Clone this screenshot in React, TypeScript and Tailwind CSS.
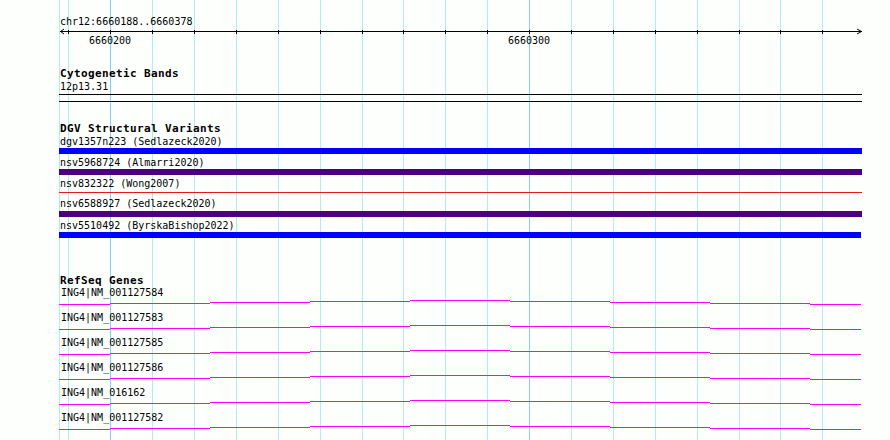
import React from "react";

const GRID = [59, 68, 110, 152, 194, 236, 278, 320, 362, 403, 445, 487, 529, 571, 613, 655, 697, 739, 780, 822];
const MAJOR = [110, 529];
const TICKS = GRID.filter((x) => x !== 59);

const DGV = [
  { label: "dgv1357n223 (Sedlazeck2020)", kind: "bar", color: "bg-[#0000ff]", w: "w-[803px]" },
  { label: "nsv5968724 (Almarri2020)", kind: "bar", color: "bg-[#4b0082]", w: "w-[803px]" },
  { label: "nsv832322 (Wong2007)", kind: "line", color: "bg-[#e31a1c]", w: "w-[803px]" },
  { label: "nsv6588927 (Sedlazeck2020)", kind: "bar", color: "bg-[#4b0082]", w: "w-[803px]" },
  { label: "nsv5510492 (ByrskaBishop2022)", kind: "bar", color: "bg-[#0000ff]", w: "w-[802px]" },
];

const GENES = [
  "ING4|NM_001127584",
  "ING4|NM_001127583",
  "ING4|NM_001127585",
  "ING4|NM_001127586",
  "ING4|NM_016162",
  "ING4|NM_001127582",
];

const SEGS = [59, 110, 210, 310, 410, 510, 610, 710, 810, 861];
const OFFS = [0, -1, -2, -3, -4, -3, -2, -1, 0];

function Grid() {
  return (
    <svg className="absolute inset-0 z-0" width={890} height={440} shapeRendering="crispEdges">
      {GRID.map((x) => (
        <rect key={x} x={x} y={0} width={1} height={440} fill={MAJOR.includes(x) ? "#87cefa" : "#afeeee"} />
      ))}
    </svg>
  );
}

function Axis() {
  return (
    <svg width={890} height={7} className="block" shapeRendering="crispEdges">
      <rect x={60} y={3} width={802} height={1} fill="#000" />
      {TICKS.map((x) => (
        <rect key={x} x={x} y={2} width={1} height={4} fill="#000" />
      ))}
      <g shapeRendering="auto" stroke="#000" strokeWidth={1} fill="none">
        <polyline points="64,1 60.5,3.5 64,6" />
        <polyline points="857,1 861.5,3.5 857,6" />
      </g>
    </svg>
  );
}

function GeneLine() {
  return (
    <svg width={890} height={13} className="block" shapeRendering="crispEdges">
      {OFFS.map((o, i) => (
        <rect key={i} x={SEGS[i]} y={5 + o} width={SEGS[i + 1] - SEGS[i]} height={1} fill="#ff00ff" />
      ))}
    </svg>
  );
}

export default function App() {
  const mono = "font-['DejaVu_Sans_Mono','Liberation_Mono',monospace]";
  const title = "h-[13px] leading-[13px] pl-[60px] text-[11px] font-bold tracking-[0.38px] whitespace-nowrap";
  const label = "h-[13px] leading-[13px] pl-[60px] text-[10px] whitespace-nowrap";
  return (
    <div className={`relative w-[890px] h-[440px] overflow-hidden bg-[#fdfffd] text-black ${mono}`}>
      <Grid />
      <div className="relative z-10 flex flex-col">
        <div className="mt-[15px] h-[13px] leading-[13px] pl-[60px] text-[10px] whitespace-nowrap">
          chr12:6660188..6660378
        </div>
        <Axis />
        <div className="relative h-[11px] text-[10px] leading-[11px]">
          <span className="absolute left-[89px] top-0">6660200</span>
          <span className="absolute left-[508px] top-0">6660300</span>
        </div>

        <div className={`mt-[21px] ${title}`}>Cytogenetic Bands</div>
        <div className="h-[14px] leading-[14px] pl-[60px] text-[10px]">12p13.31</div>
        <div className="ml-[59px] w-[803px] h-[1px] bg-black" />
        <div className="mt-[6px] ml-[59px] w-[803px] h-[1px] bg-black" />

        <div className={`mt-[20px] ${title}`}>DGV Structural Variants</div>
        <div className="flex flex-col">
          {DGV.map((d, i) => (
            <div key={d.label} className={i === 0 ? "" : i === 3 ? "mt-[4px]" : "mt-[2px]"}>
              <div className={label}>{d.label}</div>
              {d.kind === "bar" ? (
                <div className={`ml-[59px] ${d.w} h-[6px] ${d.color} ${i === 3 ? "mt-[1px]" : ""}`} />
              ) : (
                <div className={`mt-[2px] ml-[59px] ${d.w} h-[1px] ${d.color}`} />
              )}
            </div>
          ))}
        </div>

        <div className={`mt-[36px] ${title}`}>RefSeq Genes</div>
        <div className="flex flex-col">
          {GENES.map((g) => (
            <div key={g} className="flex flex-col">
              <div className="h-[12px] leading-[12px] pl-[61px] text-[10px] whitespace-nowrap">{g}</div>
              <GeneLine />
            </div>
          ))}
        </div>
      </div>
    </div>
  );
}
